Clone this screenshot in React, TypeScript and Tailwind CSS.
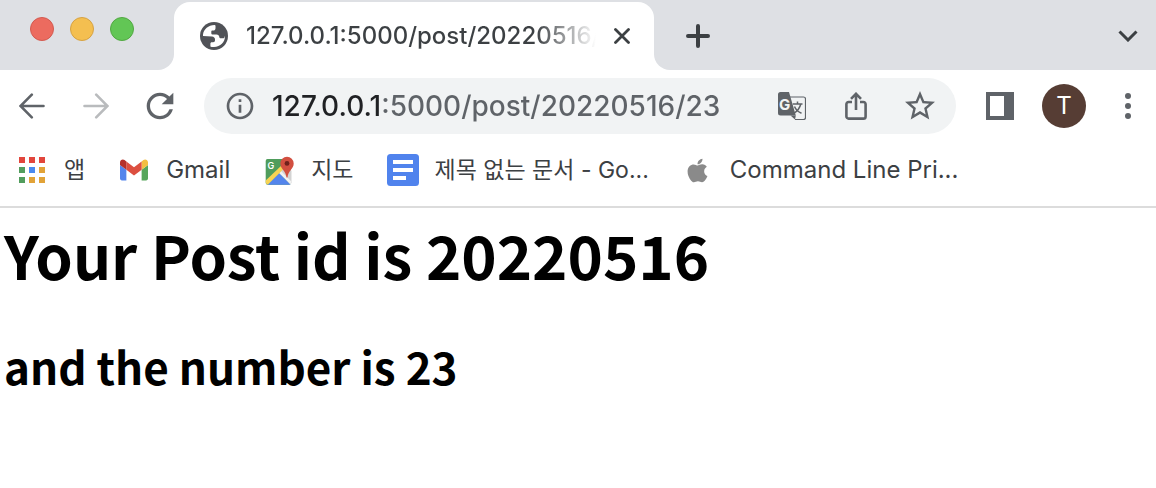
import { FaApple } from 'react-icons/fa'
import { MdInfoOutline, MdRefresh, MdStarBorder } from 'react-icons/md'

const GlobeIcon = () => (
  <svg viewBox="0 0 28 28" className="h-7 w-7 shrink-0">
    <circle cx="14" cy="14" r="14" fill="#505257" />
    <path
      d="M3 12.400C3.800 7.400 8.200 3 14.600 3c.6 0 .9.4.9 1v2.200c0 1.500-1 2.300-2.300 2.300h-.7c-.8 0-1.200.5-1.200 1.200v1.300c0 1 .6 1.500 1.500 1.500h3.600c1.800 0 2.800.9 2.900 2.500.1 1 .6 1.300 1.500 1.300h2.100c1 0 1.500-.5 1.700-1.500.6-1.100.4-.2.4-.2C24.900 20.300 20.500 25 14 25c-2 0-3-.3-3.600-.6v-2.600c0-1 .5-1.500 1.500-1.500h1.200c1.300 0 1.900-.8 1.900-2v-.8c0-1.900-1.200-3-3-3.100L3 14z"
      fill="#fff"
    />
  </svg>
)

const ArrowIcon = ({ className }: { className: string }) => (
  <svg viewBox="0 0 26 26" fill="none" stroke="currentColor" strokeWidth="2.600" strokeLinecap="round" className={className}>
    <path d="M24.500 13H2M12.800 1.700 1.500 13l11.300 11.300" />
  </svg>
)

const TranslateIcon = () => (
  <svg viewBox="0 0 28 28" className="h-7 w-7">
    <path d="M12 5h13.500a2 2 0 0 1 2 2v18.500a2 2 0 0 1-2 2H17" fill="none" stroke="#5f6368" strokeWidth="1.200" />
    <path d="M2.500 0H11l6.800 23.500H2.500A2.500 2.500 0 0 1 0 21V2.500A2.500 2.500 0 0 1 2.500 0z" fill="#5f6368" />
    <path d="M12.500 23.500h5.300L17 27.500z" fill="#5f6368" />
    <text x="1" y="17.500" fontSize="15" fontWeight="700" fill="#f1f3f4" className="font-['Inter',sans-serif]">G</text>
    <path d="M14.800 12h9.700M19.500 9.500V12M22.800 12c-1 4-4 7.500-7 9.300M16.500 14.500c1.200 3 4 5.500 7 6.800" fill="none" stroke="#5f6368" strokeWidth="1.500" />
  </svg>
)

const ShareIcon = () => (
  <svg viewBox="0 0 22 28" fill="none" stroke="#5f6368" strokeWidth="2.600" className="h-7 w-[22px]">
    <path d="M7 10H3.600a2.200 2.200 0 0 0-2.200 2.200v12.200a2.200 2.200 0 0 0 2.200 2.200h14.800a2.200 2.200 0 0 0 2.200-2.200V12.200a2.200 2.200 0 0 0-2.200-2.200H15" />
    <path d="M11 18V2M6 6.800l5-5 5 5" />
  </svg>
)

const SidePanelIcon = () => (
  <svg viewBox="0 0 28 28" className="h-7 w-7">
    <path d="M0 0h28v28H0z" fill="#5f6368" />
    <path d="M4 4h14v20H4z" fill="#fff" />
  </svg>
)

const appColors = ['#e2463c', '#e2463c', '#e2463c', '#529d5d', '#4a8af0', '#e2a338', '#529d5d', '#e2a338', '#e2a338']

const AppsIcon = () => (
  <svg viewBox="0 0 26 26" className="h-[26px] w-[26px]">
    {appColors.map((color, i) => (
      <rect key={i} x={(i % 3) * 10} y={Math.floor(i / 3) * 10} width="6" height="6" fill={color} />
    ))}
  </svg>
)

const GmailIcon = () => (
  <svg viewBox="52 42 88 66" className="h-[22px] w-7">
    <path fill="#5485ec" d="M58 108h14V74L52 59v43c0 3.320 2.690 6 6 6" />
    <path fill="#57a65b" d="M120 108h14c3.320 0 6-2.690 6-6V59l-20 15" />
    <path fill="#f3bf42" d="M120 48v26l20-15v-8c0-7.420-8.470-11.650-14.400-7.200" />
    <path fill="#dc4f40" d="M72 74V48l24 18 24-18v26L96 92" />
    <path fill="#b5302a" d="M52 51v8l20 15V48l-5.600-4.200c-5.940-4.450-14.400-.22-14.400 7.200" />
  </svg>
)

const MapsIcon = () => (
  <svg viewBox="0 0 29 29" className="h-[29px] w-[29px]">
    <path d="M2.500 3H19l7 12v11.500a2.300 2.300 0 0 1-2.300 2.300H2.500A2 2 0 0 1 .7 27V5a2 2 0 0 1 1.800-2z" fill="#4f9d5c" />
    <path d="M14 16 22 9l4.500 6v12l-1.500 1.500z" fill="#d3d3d3" />
    <path d="m2.500 28.800 11.700-12 11.300 12z" fill="#5485ec" />
    <path d="m14 17 2-2 10.300 10.600-.8 2.700z" fill="#f2f2f2" />
    <path d="M.7 24.500 17 9l2.500 3L3 28.500C1.500 28.500.7 27.500.7 26z" fill="#f7d354" />
    <text x="2.500" y="12.500" fontSize="9" fontWeight="600" fill="#fff" className="font-['Inter',sans-serif]">G</text>
    <path d="M22 .7a6.700 6.700 0 0 1 6.700 6.700c0 5.500-5.700 7-6.200 14.200h-1C21 14.400 15.300 12.900 15.300 7.400A6.700 6.700 0 0 1 22 .7z" fill="#d24f40" />
    <circle cx="22" cy="7.400" r="2.400" fill="#6f211c" />
  </svg>
)

const DocsIcon = () => (
  <svg viewBox="0 0 32 32" className="h-8 w-8">
    <rect width="32" height="32" rx="3.500" fill="#5083ed" />
    <path d="M6 6h20v4H6zM6 14h20v4H6zM6 22h13v4H6z" fill="#fff" />
  </svg>
)

// Hangul is set a touch smaller than Latin
const bookmarks = [
  { label: '앱', icon: <AppsIcon />, size: 'text-[23px]' },
  { label: 'Gmail', icon: <GmailIcon />, size: 'text-2xl' },
  { label: '지도', icon: <MapsIcon />, size: 'text-[23px]' },
  { label: '제목 없는 문서 - Go...', icon: <DocsIcon />, size: 'text-[23px]' },
  { label: 'Command Line Pri...', icon: <FaApple className="h-[27px] w-[27px] text-[#8a8a8a]" />, size: 'text-2xl' },
]

const TabStrip = () => (
  <header className="flex h-[70px] bg-white">
    <div className="flex w-[174px] shrink-0 gap-4 rounded-br-2xl bg-[#dee0e4] pl-[30px] pt-[17px]">
      <button aria-label="Close window" className="h-6 w-6 rounded-full border border-[#d35a50] bg-[#ec6b5f]" />
      <button aria-label="Minimize window" className="h-6 w-6 rounded-full border border-[#d6a243] bg-[#f4bf50]" />
      <button aria-label="Zoom window" className="h-6 w-6 rounded-full border border-[#52a842] bg-[#62c655]" />
    </div>
    <div className="w-[480px] bg-[linear-gradient(#dee0e4_50%,#fff_50%)] pt-[2px]">
      <div className="flex h-full items-center rounded-t-2xl bg-white pl-[26px] pr-5">
        <GlobeIcon />
        <span className="ml-[18px] whitespace-nowrap bg-[linear-gradient(90deg,#3c4043_290px,transparent_350px)] bg-clip-text text-2xl font-[450] text-transparent">
          127.0.0.1:5000/post/20220516/
        </span>
        <button aria-label="Close tab" className="ml-auto flex h-6 w-6 shrink-0 items-center justify-center">
          <svg viewBox="0 0 16 16" className="h-4 w-4" stroke="#3c4043" strokeWidth="2.800" strokeLinecap="round">
            <path d="m1.500 1.500 13 13M14.500 1.500l-13 13" />
          </svg>
        </button>
      </div>
    </div>
    <div className="flex flex-1 items-center justify-between rounded-bl-2xl bg-[#dee0e4] pl-8 pr-[18px] pt-[2px]">
      <button aria-label="New tab">
        <svg viewBox="0 0 24 24" className="h-6 w-6" stroke="#3c4043" strokeWidth="4" strokeLinecap="round">
          <path d="M12 2v20M2 12h20" />
        </svg>
      </button>
      <button aria-label="Search tabs">
        <svg viewBox="0 0 20 12" className="h-3 w-5" fill="none" stroke="#3c4043" strokeWidth="3">
          <path d="m1.500 1.500 8.500 8.500 8.500-8.500" />
        </svg>
      </button>
    </div>
  </header>
)

const iconButton = 'flex w-16 shrink-0 items-center justify-center'

const Toolbar = () => (
  <nav className="flex h-[72px] items-stretch text-[#5f6368]">
    <button aria-label="Back" className={iconButton}>
      <ArrowIcon className="h-[26px] w-[26px]" />
    </button>
    <button aria-label="Forward" className={iconButton}>
      <ArrowIcon className="h-[26px] w-[26px] rotate-180 text-[#b9bbbd]" />
    </button>
    <button aria-label="Reload" className={iconButton}>
      <MdRefresh className="h-10 w-10" />
    </button>
    <div className="mx-3 my-2 flex min-w-0 flex-1 items-stretch rounded-full bg-[#f1f3f4] pl-5 pr-1">
      <MdInfoOutline className="mr-4 h-8 w-8 shrink-0 self-center" />
      <input
        aria-label="Address"
        type="text"
        defaultValue="127.0.0.1:5000/post/20220516/23"
        className="min-w-0 flex-1 bg-[linear-gradient(90deg,#202124_110px,#5f6368_110px)] bg-clip-text text-[28px] font-[450] text-transparent outline-none"
      />
      <button aria-label="Translate" className={iconButton}>
        <TranslateIcon />
      </button>
      <button aria-label="Share" className={iconButton}>
        <ShareIcon />
      </button>
      <button aria-label="Bookmark" className={iconButton}>
        <MdStarBorder className="h-9 w-9" />
      </button>
    </div>
    <button aria-label="Side panel" className={iconButton}>
      <SidePanelIcon />
    </button>
    <button aria-label="Profile" className={iconButton}>
      <span className="flex h-11 w-11 items-center justify-center rounded-full bg-[#563d34] text-2xl text-white">T</span>
    </button>
    <button aria-label="Menu" className="flex w-15 shrink-0 items-center justify-center pl-1">
      <svg viewBox="0 0 6 26" className="h-[26px] w-[6px]" fill="currentColor">
        <circle cx="3" cy="3" r="3" />
        <circle cx="3" cy="13" r="3" />
        <circle cx="3" cy="23" r="3" />
      </svg>
    </button>
  </nav>
)

const BookmarkBar = () => (
  <nav className="flex h-[66px] items-center gap-[33px] overflow-hidden border-b-2 border-[#dcdcdc] pb-2 pl-4">
    {bookmarks.map(({ label, icon, size }) => (
      <a key={label} href="#" className={`flex shrink-0 items-center gap-4 whitespace-nowrap text-[#3c4043] ${size}`}>
        <span className="flex w-8 justify-center">{icon}</span>
        {label}
      </a>
    ))}
  </nav>
)

export default function App() {
  return (
    <div className="min-h-screen bg-white font-['Inter','Noto_Sans_CJK_KR',sans-serif]">
      <TabStrip />
      <Toolbar />
      <BookmarkBar />
      <main className="px-1 pt-[10px] font-['Noto_Sans_CJK_KR',sans-serif] font-bold text-black">
        <h1 className="text-[60px] leading-[72px]">Your Post id is 20220516</h1>
        <h2 className="mt-10 text-[44px] leading-[72px]">and the number is 23</h2>
      </main>
    </div>
  )
}
